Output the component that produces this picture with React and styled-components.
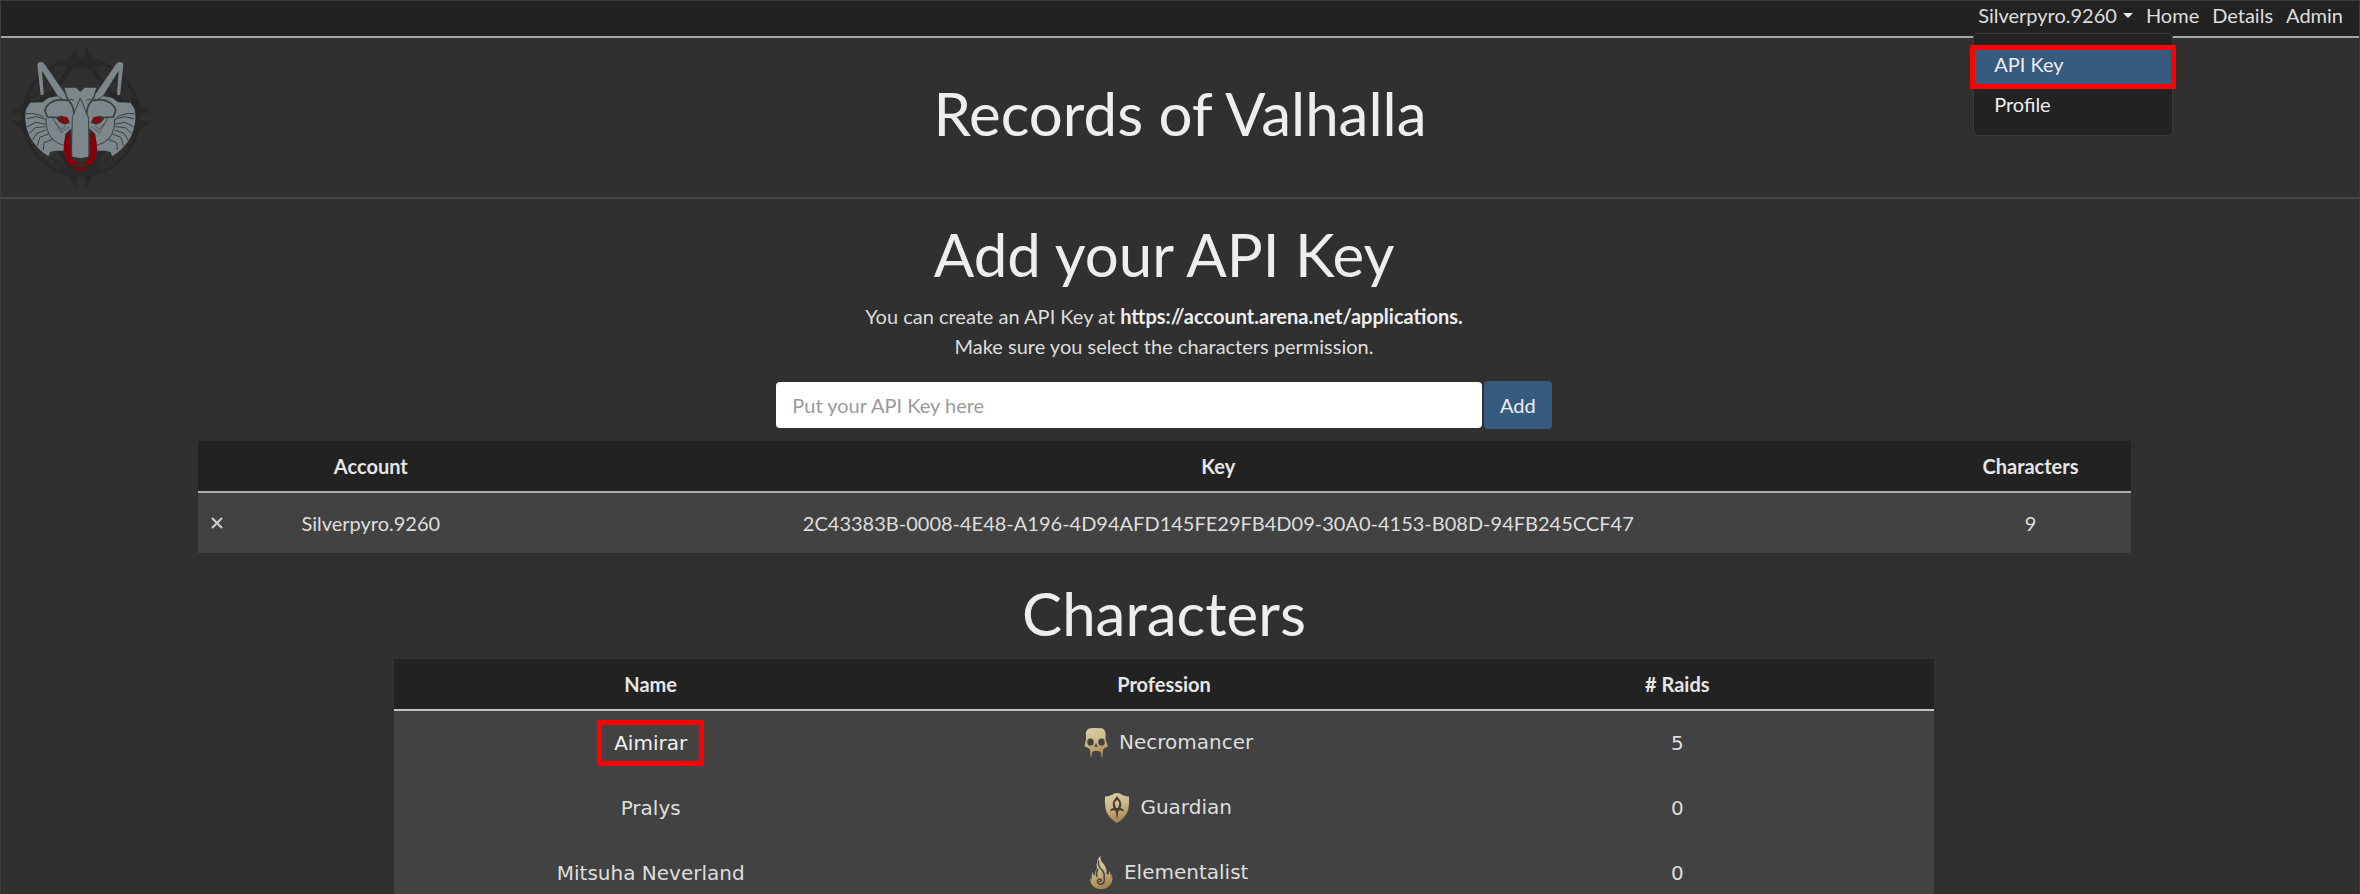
import React from "react";
import styled, { createGlobalStyle, css } from "styled-components";

const GlobalStyle = createGlobalStyle`
  *, *::before, *::after { box-sizing: border-box; }
  body {
    margin: 0;
    background: #303030;
    color: #dedede;
    font-family: Lato, "Liberation Sans", sans-serif;
    font-size: 20px;
    line-height: 30px;
  }
`;

const Page = styled.div`
  min-height: 100vh;
  border: 1px solid #3c3c3c;
`;

const NavBar = styled.nav`
  display: flex;
  justify-content: flex-end;
  align-items: flex-start;
  gap: 13px;
  height: 37px;
  padding: 0 16px;
  background: #222;
  border-bottom: 2px solid #a6a6a6;
  line-height: 28px;
`;

const navText = css`
  color: #dedede;
  font: inherit;
  text-decoration: none;
`;

const NavLink = styled.a`
  ${navText}
`;

const UserMenu = styled.div`
  position: relative;
`;

const UserButton = styled.button`
  ${navText}
  display: flex;
  align-items: center;
  gap: 6px;
  padding: 0;
  border: 0;
  background: none;
`;

const Caret = styled.span`
  border: 5px solid transparent;
  border-top-color: #eee;
  border-bottom: 0;
`;

const Menu = styled.div`
  position: absolute;
  z-index: 1;
  top: 32px;
  left: -5px;
  width: 200px;
  padding: 15px 0 6px;
  background: #222;
  border: 1px solid #3b3b3b;
  border-radius: 5px;
`;

const MenuItem = styled.a`
  display: block;
  height: 36px;
  margin-bottom: 4px;
  padding: 1px 20px;
  color: #eee;
  text-decoration: none;
  background: ${(p) => (p.$active ? "#375a7f" : "transparent")};
  outline: ${(p) => (p.$active ? "5px solid #f00" : "none")};
  outline-offset: -1px;
`;

const Header = styled.header`
  display: grid;
  grid-template-columns: 1fr auto 1fr;
  align-items: center;
  padding: 8px 11px 9px;
  border-bottom: 2px solid #484848;
`;

const Heading = styled.h1`
  margin: 0;
  color: #eee;
  font-size: 60px;
  font-weight: 400;
  line-height: 72px;
  text-align: center;
`;

const SiteTitle = styled(Heading)`
  padding-bottom: 8px;
`;

const Main = styled.main`
  display: flex;
  flex-direction: column;
  align-items: center;
  margin-right: 32px;
  padding-top: 19px;
`;

const Column = styled.section`
  width: calc((100% + 32px) * ${(p) => p.$span} / 12 - 32px);
`;

const Intro = styled.p`
  margin: 11px 0 20px;
  text-align: center;
`;

const DocsLink = styled.a`
  color: #eee;
  font-weight: 700;
  text-decoration: none;
`;

const KeyForm = styled.form`
  display: flex;
  align-items: center;
  gap: 2px;
  width: calc(100% / 3);
  margin-bottom: 12px;
`;

const KeyInput = styled.input`
  flex: 1;
  min-width: 0;
  height: 46px;
  padding: 0 16px;
  border: 0;
  border-radius: 4px;
  background: #fff;
  color: #444;
  font: inherit;
  &::placeholder { color: #999; opacity: 1; }
`;

const AddButton = styled.button`
  height: 48px;
  padding: 0 16px;
  border: 0;
  border-radius: 4px;
  background: #375a7f;
  color: #eee;
  font: inherit;
`;

const Table = styled.table`
  width: 100%;
  table-layout: fixed;
  border-collapse: separate;
  border-spacing: 0;
  text-align: center;
`;

const HeadCell = styled.th`
  width: ${(p) => p.$width || "auto"};
  height: 52px;
  padding: 0;
  background: #222;
  border-bottom: 2px solid ${(p) => p.$line || "#adadad"};
  color: #e6e6e6;
  font-weight: 700;
`;

const Cell = styled.td`
  height: 60px;
  padding: 0;
  background: #424242;
`;

const CharCell = styled(Cell)`
  height: 65px;
  border-bottom: 1px solid #444;
  font-family: "DejaVu Sans", sans-serif;
`;

const RemoveButton = styled.button`
  display: block;
  margin: 0 auto;
  padding: 0;
  border: 0;
  background: none;
  color: #cfcfcf;
  line-height: 0;
`;

const CharactersHeading = styled(Heading)`
  margin: 24px 0 10px;
`;

const Name = styled.span`
  display: inline-block;
  ${(p) => p.$marked && css`
    padding: 3px 12px;
    border: 5px solid #f00;
    color: #f2f2f2;
  `}
`;

const ProfessionIcon = styled.svg`
  width: 38px;
  height: 38px;
  vertical-align: middle;
`;

const Gold = ({ id }) => (
  <defs>
    <linearGradient id={id} x1="0" y1="0" x2="0.25" y2="1">
      <stop offset="0" stopColor="#dccfa8" />
      <stop offset="0.5" stopColor="#cdb98c" />
      <stop offset="1" stopColor="#a98752" />
    </linearGradient>
  </defs>
);

const Necromancer = () => (
  <ProfessionIcon viewBox="0 0 38 38" aria-hidden="true">
    <Gold id="gold-n" />
    <path fill="url(#gold-n)" fillRule="evenodd" d="M14 4.500 L18 4 L27 4.300 Q30.500 6 30.700 10 L30.500 15 L33 22.500 L29.500 24 L28 26 L27.500 32.500 L26.500 34 L26 29 L24 27 L19 27 L17 28.500 L16.300 33.500 L15.500 32 L15 25.500 L13 23.800 L9.500 22.500 L11 15 L10.800 9 Q11 6 14 4.500 Z M15.500 14.500 A3.300 3.600 0 1 0 15.500 21.700 A3.300 3.600 0 1 0 15.500 14.500 Z M26.500 14.500 A3.300 3.600 0 1 0 26.500 21.700 A3.300 3.600 0 1 0 26.500 14.500 Z M21 19 L19 23 L20.800 22.500 L23 23 Z" />
  </ProfessionIcon>
);

const Guardian = () => (
  <ProfessionIcon viewBox="0 0 38 38" aria-hidden="true">
    <Gold id="gold-g" />
    <path fill="url(#gold-g)" d="M9 7.500 Q15 7 18 4.500 Q21 3.500 24 4.500 Q27 7 33 7.500 Q33.500 17 31.500 23 Q28 30 21 34 Q14 30 10.500 23 Q8.500 17 9 7.500 Z" />
    <path fill="#443c34" fillRule="evenodd" d="M21 7 L23.500 10.500 Q26 13.500 25 17.500 L24.500 19 L27 20 L28 22.500 L25.500 21.500 L22.500 21.500 L21 30.500 L19.500 21.500 L16.500 21.500 L14 22.500 L15 20 L17.500 19 L17 17.500 Q16 13.500 18.500 10.500 Z M21 11 Q18 13 19 16 L20 19 L22 19 L23 16 Q24 13 21 11 Z" />
  </ProfessionIcon>
);

const Elementalist = () => (
  <ProfessionIcon viewBox="0 0 38 38" aria-hidden="true">
    <Gold id="gold-e" />
    <path fill="url(#gold-e)" d="M20.500 2 Q20 5 21.500 7.500 Q27.500 13 26.500 20 Q29 21.500 29.500 17 Q31 19.500 30.500 21.500 L32 20 Q31.500 23 31 24 L32.500 23 Q33 29 28 33 Q21 37.500 14 33 Q10 30 10.300 24 L12 25.500 Q11 21 13 18 Q13 21.500 14.500 22 Q14.500 18 17 14.500 Q15.500 6 20.500 2 Z" />
    <path fill="none" stroke="#424242" strokeWidth="1.500" strokeLinecap="round" d="M18.500 7 Q17.500 12 22 16 Q25 19.500 24 23 Q25.500 28 22 30 Q17.500 31 17.500 27 Q18 24 21 25.500 Q21.500 27 20 27.500 M17.800 15.500 Q15.500 19 17 22.500" />
  </ProfessionIcon>
);

const LogoLink = styled.a`
  justify-self: start;
  line-height: 0;
`;

const LogoHalf = () => (
  <g>
    <path fill="#7b878a" d="M122 96 Q113 96 112 106 L122 195 L131 194 L126 122 L172 196 L192 209 L201 208 L196 193 L134 103 Q130 96 122 96 Z" />
    <path fill="#7b878a" d="M193 173 L228 173 L242 187 L242 385 L217 380 L214 295 L196 312 L190 362 L166 362 L150 366 L146 379 Q112 360 88 318 Q70 275 78 238 L90 218 L128 217 L146 203 L174 199 L192 212 L204 206 Z" />
    <g fill="none" stroke="#3a3d3e" strokeWidth="3">
      <path strokeWidth="5" d="M134 242 Q145 212 180 209 L206 212 Q220 226 222 250 M134 240 L142 261 L168 262" />
      <path d="M138 266 Q136 300 155 326 Q172 342 192 346" />
      <path d="M196 198 Q206 212 222 210 M241 204 L217 262 L214 376" />
      <path d="M78 252 Q105 246 132 262 M80 266 L108 260 L138 268 M82 290 L108 277 L138 283 M88 310 L106 293 L136 290 M98 330 L110 310 L138 300 M112 347 L119 322 L145 312 M130 360 L132 338 L158 328" />
      <path strokeWidth="2" d="M158 264 L184 308 L208 290 M166 278 L184 298 L198 288" />
    </g>
    <path fill="#333536" d="M166 262 L184 257 L202 262 L210 279 L194 284 L178 277 Z" />
    <ellipse cx="192" cy="271" rx="13" ry="9" fill="#8d0008" />
    <path fill="#850008" d="M210 303 Q191 318 192 352 Q192 398 212 406 L232 406 Q236 396 218 390 L212 374 Z M220 414 L241 411 L241 424 Q228 422 220 414 Z" />
    <path fill="#303030" d="M217 382 L242 386 L242 410 L236 396 L222 390 Z" />
  </g>
);

const Logo = () => (
  <svg width="138" height="142" viewBox="36 48 414 426" role="img" aria-label="Wolf head emblem">
    <g fill="none" stroke="#28282a">
      <circle cx="243" cy="262" r="174" strokeWidth="9" />
      <circle cx="243" cy="262" r="150" strokeWidth="4" />
      <circle cx="243" cy="262" r="162" strokeWidth="12" strokeDasharray="3 18" />
      {[0, 90, 180, 270].map((a) => (
        <path key={a} strokeWidth="14" d="M222 100 L150 200 M264 100 L336 200" transform={`rotate(${a} 243 262)`} />
      ))}
    </g>
    <g fill="#28282a">
      {[0, 90, 180, 270].map((a) => (
        <path key={a} d="M230 50 L232 88 L254 88 L256 50 L286 96 L310 110 L262 112 L224 112 L176 110 L200 96 Z" transform={`rotate(${a} 243 262)`} />
      ))}
    </g>
    <LogoHalf />
    <g transform="translate(482 0) scale(-1 1)"><LogoHalf /></g>
  </svg>
);

const characters = [
  { name: "Aimirar", profession: "Necromancer", Icon: Necromancer, raids: 5, marked: true },
  { name: "Pralys", profession: "Guardian", Icon: Guardian, raids: 0 },
  { name: "Mitsuha Neverland", profession: "Elementalist", Icon: Elementalist, raids: 0 },
];

export default function App() {
  return (
    <Page>
      <GlobalStyle />
      <NavBar>
        <UserMenu>
          <UserButton type="button" aria-expanded="true">
            Silverpyro.9260 <Caret />
          </UserButton>
          <Menu>
            <MenuItem href="#api-key" $active>API Key</MenuItem>
            <MenuItem href="#profile">Profile</MenuItem>
          </Menu>
        </UserMenu>
        <NavLink href="#home">Home</NavLink>
        <NavLink href="#details">Details</NavLink>
        <NavLink href="#admin">Admin</NavLink>
      </NavBar>
      <Header>
        <LogoLink href="#home"><Logo /></LogoLink>
        <SiteTitle>Records of Valhalla</SiteTitle>
      </Header>
      <Main>
        <Heading as="h2">Add your API Key</Heading>
        <Intro>
          You can create an API Key at{" "}
          <DocsLink href="#applications">https://account.arena.net/applications.</DocsLink>
          <br />
          Make sure you select the characters permission.
        </Intro>
        <KeyForm>
          <KeyInput type="text" aria-label="API Key" placeholder="Put your API Key here" />
          <AddButton type="button">Add</AddButton>
        </KeyForm>
        <Column $span={10}>
          <Table>
            <thead>
              <tr>
                <HeadCell $width="38px" aria-label="Remove" />
                <HeadCell $width="14%">Account</HeadCell>
                <HeadCell>Key</HeadCell>
                <HeadCell $width="200px">Characters</HeadCell>
              </tr>
            </thead>
            <tbody>
              <tr>
                <Cell>
                  <RemoveButton type="button" aria-label="Remove key">
                    <svg width="12" height="12" viewBox="0 0 12 12" stroke="currentColor" strokeWidth="2">
                      <path d="M1 1 L11 11 M11 1 L1 11" />
                    </svg>
                  </RemoveButton>
                </Cell>
                <Cell>Silverpyro.9260</Cell>
                <Cell>2C43383B-0008-4E48-A196-4D94AFD145FE29FB4D09-30A0-4153-B08D-94FB245CCF47</Cell>
                <Cell>9</Cell>
              </tr>
            </tbody>
          </Table>
        </Column>
        <Column $span={8}>
          <CharactersHeading as="h2">Characters</CharactersHeading>
          <Table>
            <thead>
              <tr>
                <HeadCell $line="#c4c4c4">Name</HeadCell>
                <HeadCell $line="#c4c4c4">Profession</HeadCell>
                <HeadCell $line="#c4c4c4"># Raids</HeadCell>
              </tr>
            </thead>
            <tbody>
              {characters.map(({ name, profession, Icon, raids, marked }) => (
                <tr key={name}>
                  <CharCell><Name $marked={marked}>{name}</Name></CharCell>
                  <CharCell><Icon /> {profession}</CharCell>
                  <CharCell>{raids}</CharCell>
                </tr>
              ))}
            </tbody>
          </Table>
        </Column>
      </Main>
    </Page>
  );
}
